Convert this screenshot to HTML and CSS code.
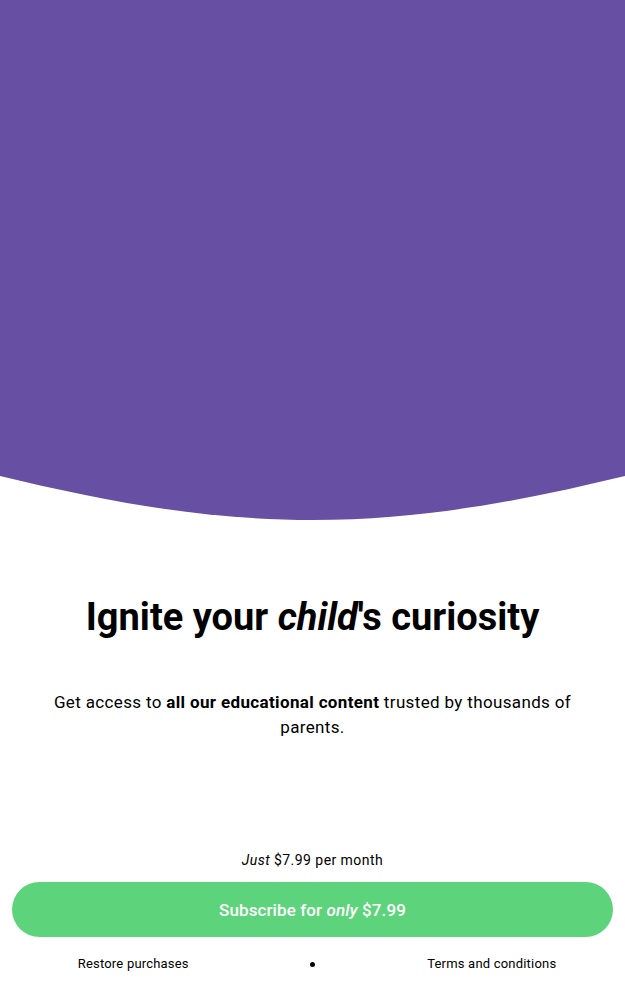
FILE: index.html
```html
<!DOCTYPE html>
<html lang="en">
<head>
<meta charset="utf-8">
<title>Subscribe</title>
<link rel="stylesheet" href="styles.css">
</head>
<body>
<div class="page">
  <svg class="hero" viewBox="0 0 625 520" preserveAspectRatio="none" aria-hidden="true">
    <path d="M0 0 H625 V476 C525 500 425 520 312.5 520 C200 520 100 500 0 476 Z" fill="#6750A4"/>
  </svg>
  <main class="content">
    <h1 class="title">Ignite your <em>child</em>'s curiosity</h1>
    <p class="lead">Get access to <strong>all our educational content</strong> trusted by thousands of parents.</p>
    <p class="price"><em>Just</em> $7.99 per month</p>
    <button class="cta" type="button">Subscribe for <em>only</em> $7.99</button>
    <nav class="links">
      <a class="link" href="#">Restore purchases</a>
      <span class="dot"></span>
      <a class="link" href="#">Terms and conditions</a>
    </nav>
  </main>
</div>
</body>
</html>
```
FILE: styles.css
```css
html, body {
  margin: 0;
  padding: 0;
  background: #ffffff;
}
body {
  font-family: Roboto, "Noto Sans", "Liberation Sans", sans-serif;
  color: #000000;
}
.page {
  width: 625px;
  height: 1000px;
  overflow: hidden;
}
.hero {
  display: block;
  width: 625px;
  height: 520px;
}
.content {
  display: flex;
  flex-direction: column;
  align-items: stretch;
}
.title {
  margin: 75px 0 0;
  font-size: 38px;
  line-height: 44px;
  font-weight: 700;
  text-align: center;
}
.title em {
  font-style: italic;
}
.lead {
  margin: 51px 0 0;
  padding: 0 48px;
  font-size: 17px;
  line-height: 25px;
  letter-spacing: 0.35px;
  text-align: center;
}
.lead strong {
  font-weight: 700;
}
.price {
  margin: 110px 0 0;
  font-size: 14px;
  line-height: 20px;
  letter-spacing: 0.45px;
  text-align: center;
}
.cta {
  margin: 12px 12px 0;
  height: 55px;
  border: none;
  border-radius: 28px;
  background: #5DD47C;
  color: #ffffff;
  font-family: inherit;
  font-size: 17px;
  font-weight: 500;
  letter-spacing: 0.1px;
  cursor: pointer;
}
.links {
  display: grid;
  grid-template-columns: 1fr 92px 1fr;
  align-items: center;
  margin-top: 17px;
  height: 20px;
}
.link {
  justify-self: center;
  color: #000000;
  text-decoration: none;
  font-size: 13px;
  line-height: 20px;
  letter-spacing: 0.2px;
}
.dot {
  justify-self: center;
  width: 5px;
  height: 5px;
  border-radius: 50%;
  background: #000000;
}
```
